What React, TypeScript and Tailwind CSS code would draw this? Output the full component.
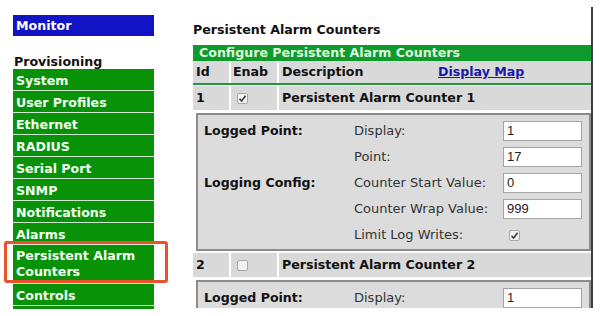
import React from "react";

const NAV = [
  "System",
  "User Profiles",
  "Ethernet",
  "RADIUS",
  "Serial Port",
  "SNMP",
  "Notifications",
  "Alarms",
];

function Check({ on }: { on: boolean }) {
  return (
    <span className="flex h-[11px] w-[11px] items-center justify-center rounded-[2px] border border-[#a9a9a9] bg-[#f2f2f2]">
      {on && (
        <svg width="9" height="9" viewBox="0 0 9 9">
          <path d="M1.5 4.8 L3.6 7 L7.6 1.8" fill="none" stroke="#3a3a3a" strokeWidth="1.6" />
        </svg>
      )}
    </span>
  );
}

function Field({ value }: { value: string }) {
  return (
    <div className="flex h-[20px] w-[79px] items-center border border-[#a5a5a5] bg-white pl-[3px] font-['Liberation_Sans',sans-serif] text-[13px] text-[#222]">
      {value}
    </div>
  );
}

function CounterRow({ id, on }: { id: string; on: boolean }) {
  return (
    <div className="grid h-[24px] grid-cols-[36px_46px_1fr] gap-x-[2px] font-bold">
      <div className="flex items-center bg-[#d9d9d9] pl-[3px]">{id}</div>
      <div className="flex items-center bg-[#d9d9d9] pl-[6px]">
        <Check on={on} />
      </div>
      <div className="flex items-center bg-[#d9d9d9] pl-[3px]">Persistent Alarm Counter {id}</div>
    </div>
  );
}

function Panel({ full }: { full: boolean }) {
  const rows: [string, string, React.ReactNode][] = full
    ? [
        ["Logged Point:", "Display:", <Field value="1" />],
        ["", "Point:", <Field value="17" />],
        ["Logging Config:", "Counter Start Value:", <Field value="0" />],
        ["", "Counter Wrap Value:", <Field value="999" />],
        [
          "",
          "Limit Log Writes:",
          <div className="flex pl-[6px]">
            <Check on />
          </div>,
        ],
      ]
    : [["Logged Point:", "Display:", <Field value="1" />]];
  return (
    <div className="ml-[3px] border-2 border-[#8c8c8c] bg-[#dcdcdc] pt-[3px] pb-[1px] pl-[6px]">
      {rows.map(([a, b, c], i) => (
        <div key={i} className="grid h-[26px] grid-cols-[150px_149px_79px] items-center">
          <div className="font-bold text-[#111]">{a}</div>
          <div className="text-[13px] text-[#333]">{b}</div>
          <div>{c}</div>
        </div>
      ))}
    </div>
  );
}

export default function App() {
  return (
    <div className="flex h-[316px] w-[600px] overflow-hidden bg-white font-['DejaVu_Sans',Verdana,sans-serif] text-[12.6px] text-[#111]">
      {/* left nav */}
      <div className="ml-[13px] mt-[15px] w-[141px]">
        <div className="h-[21px] bg-[#1313c6] pl-[3px] font-bold leading-[21px] text-white">Monitor</div>
        <div className="flex h-[33px] items-end pb-[0px] pl-[1px] font-bold leading-[15px] text-[#111]">Provisioning</div>
        {NAV.map((n) => (
          <div
            key={n}
            className="h-[22px] border-b border-[#cfe8cf] bg-[#079207] pl-[3px] pt-[1px] font-bold leading-[21px] text-[#f4fff4]"
          >
            {n}
          </div>
        ))}
        <div className="relative h-[39px] border-b border-[#cfe8cf] bg-[#079207] pl-[3px] pt-[3px] font-bold leading-[16px] text-[#f4fff4]">
          Persistent Alarm
          <br />
          Counters
          <div className="absolute -left-[9px] -right-[14px] -top-[4px] bottom-0 rounded-[3px] border-[3px] border-[#e8532c]" />
        </div>
        <div className="h-[22px] border-b border-[#cfe8cf] bg-[#079207] pl-[3px] pt-[1px] font-bold leading-[21px] text-[#f4fff4]">
          Controls
        </div>
        <div className="h-[3px] bg-[#079207]" />
      </div>

      {/* main */}
      <div className="ml-[39px] mt-[7px] h-[301px] w-[400px] overflow-hidden border-r-2 border-[#3d3d3d]">
        <div className="h-[38px] pt-[15px] font-bold leading-[16px]">Persistent Alarm Counters</div>
        <div className="h-[16px] bg-[#0e9a2d] pl-[6px] font-bold leading-[16px] text-[#def6de]">
          Configure Persistent Alarm Counters
        </div>
        <div className="grid h-[22px] grid-cols-[36px_46px_1fr] gap-x-[2px] font-bold">
          <div className="flex items-center bg-[#d9d9d9] pl-[3px]">Id</div>
          <div className="flex items-center bg-[#d9d9d9] pl-[2px]">Enab</div>
          <div className="flex items-center bg-[#d9d9d9] pl-[3px]">
            <span className="w-[156px]">Description</span>
            <span className="text-[#1a1aa8] underline">Display Map</span>
          </div>
        </div>
        <div className="h-[2px] bg-[#1f9a3a]" />
        <div className="mt-[1px]">
          <CounterRow id="1" on />
        </div>
        <div className="mt-[3px]">
          <Panel full />
        </div>
        <div className="mt-[2px]">
          <CounterRow id="2" on={false} />
        </div>
        <div className="mt-[3px]">
          <Panel full={false} />
        </div>
      </div>
    </div>
  );
}
